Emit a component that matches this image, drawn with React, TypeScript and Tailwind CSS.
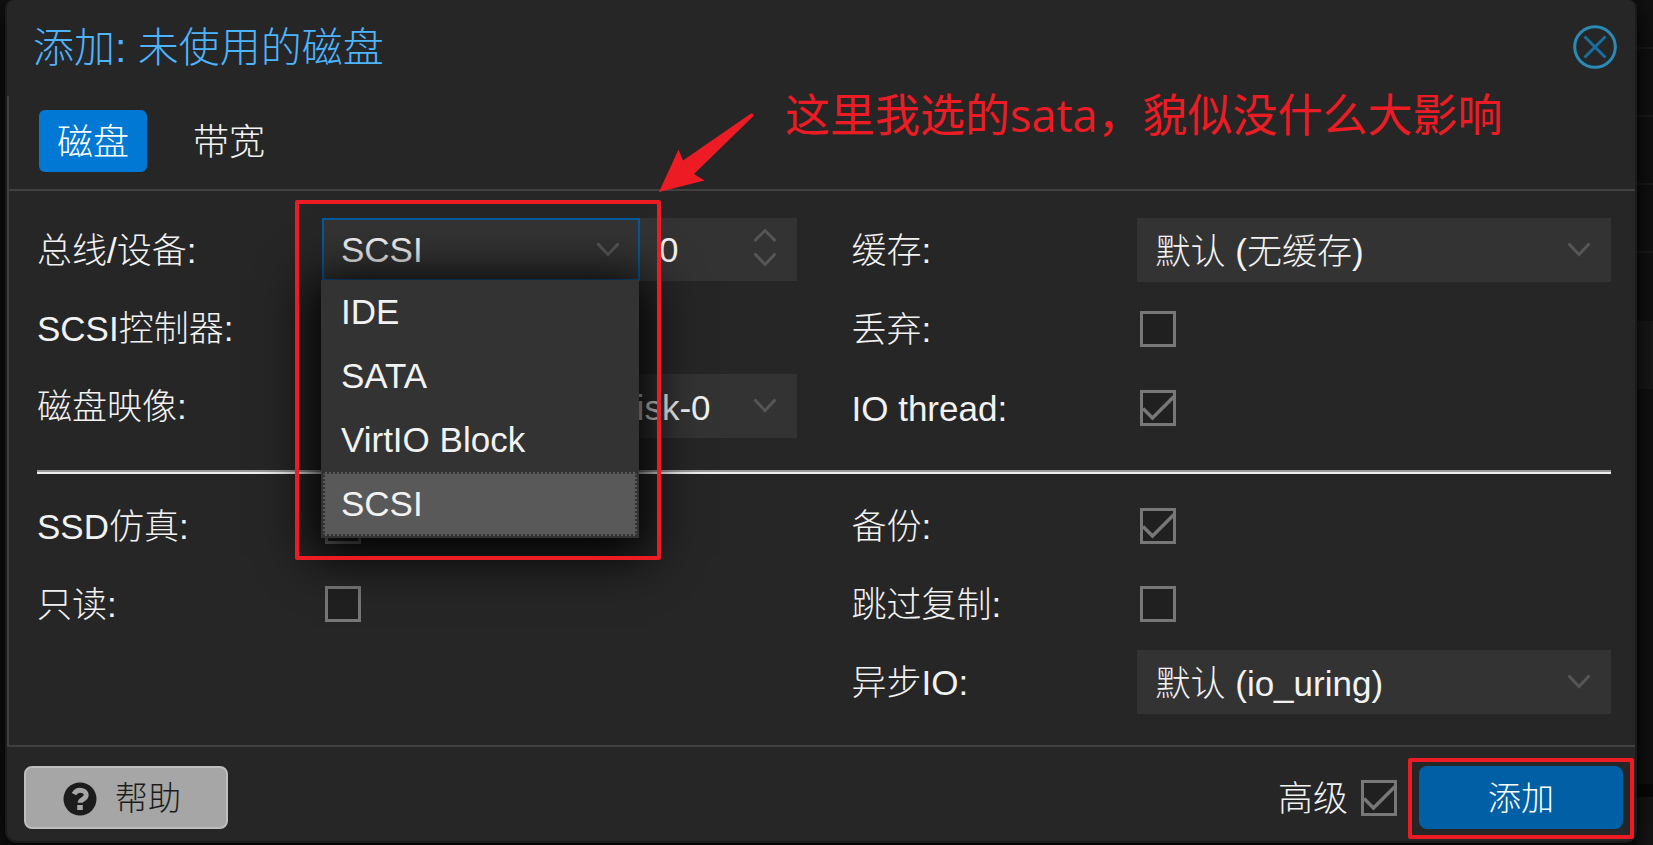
import type { ReactNode } from "react";

function Chevron({ up = false }: { up?: boolean }) {
  return (
    <svg width="24" height="16" viewBox="0 0 24 16" fill="none" stroke="#565656" strokeWidth="3" aria-hidden="true">
      <path d={up ? "M1.5 14 12 3.5 22.5 14" : "M1.5 1.500 12 12.500 22.5 1.500"} />
    </svg>
  );
}

function Row({ label, htmlFor, children }: { label: string; htmlFor: string; children?: ReactNode }) {
  return (
    <div className="flex h-16 items-center">
      <label htmlFor={htmlFor} className="w-[285px] shrink-0 pt-0.5 whitespace-nowrap">
        {label}
      </label>
      <div className="flex h-full min-w-0 flex-1 items-center">{children}</div>
    </div>
  );
}

function Select({ id, value }: { id: string; value: string }) {
  return (
    <div className="relative min-w-0 flex-1">
      <select id={id} className="block h-16 w-full appearance-none bg-[#333333] pt-1 pr-14 pl-[19px] outline-none">
        <option>{value}</option>
      </select>
      <span className="pointer-events-none absolute top-6 right-5">
        <Chevron />
      </span>
    </div>
  );
}

function Check({ id, checked = false }: { id: string; checked?: boolean }) {
  return (
    <span className="relative ml-[3px] block size-9 shrink-0">
      <input
        id={id}
        type="checkbox"
        defaultChecked={checked}
        className="peer block size-9 appearance-none border-3 border-[#777777] bg-[#202020]"
      />
      <svg
        className="pointer-events-none absolute inset-0 hidden peer-checked:block"
        width="36"
        height="36"
        viewBox="0 0 36 36"
        fill="none"
        stroke="#777777"
        strokeWidth="3.5"
        aria-hidden="true"
      >
        <path d="M3 18.5 12.5 28 34 6.5" />
      </svg>
    </span>
  );
}

const busTypes = ["IDE", "SATA", "VirtIO Block", "SCSI"];

function BusSelect() {
  return (
    <div className="relative w-[318px] shrink-0 self-start">
      <select
        id="bus"
        defaultValue="SCSI"
        className="block h-[63px] w-full appearance-none border-2 border-[#005a9e] bg-[#333333] pl-[17px] outline-none"
      >
        {busTypes.map((b) => (
          <option key={b}>{b}</option>
        ))}
      </select>
      <span className="pointer-events-none absolute top-6 right-5">
        <Chevron />
      </span>
      <ul
        role="listbox"
        aria-label="总线"
        className="absolute top-[62px] -left-px z-10 w-full border-x-2 border-b-2 border-[#333333] bg-[#333333] shadow-[0_8px_48px_10px_#000000]"
      >
        {busTypes.map((b) => (
          <li
            key={b}
            role="option"
            aria-selected={b === "SCSI"}
            className="flex h-16 items-center border-2 border-dotted border-transparent pl-4 aria-selected:border-[#333333] aria-selected:bg-[#595959]"
          >
            {b}
          </li>
        ))}
      </ul>
      <span className="pointer-events-none absolute -top-[18px] -left-[27px] z-20 h-[360px] w-[366px] rounded-xs border-4 border-[#ed1c24]" />
    </div>
  );
}

export default function App() {
  return (
    <div className="relative min-h-screen overflow-hidden bg-[#111111] pr-4 pl-[5px] font-['Liberation_Sans','Noto_Sans_CJK_SC',sans-serif] text-[35px] leading-[42px] font-light text-[#f2f2f2]">
      <div className="absolute inset-y-0 right-0 flex w-4 flex-col" aria-hidden="true">
        <div className="h-[49px] border-b-2 border-[#1a1a1a]" />
        <div className="h-17 border-b-2 border-[#1a1a1a]" />
        <div className="h-17 border-b-2 border-[#1a1a1a]" />
        <div className="h-17 border-b-2 border-[#1a1a1a]" />
        <div className="h-17" />
        <div className="h-17 bg-[#191919]" />
        <div className="flex-1" />
        <div className="h-[13px] bg-[#080808]" />
        <div className="h-12 bg-[#161616]" />
      </div>

      <section
        role="dialog"
        aria-labelledby="dialog-title"
        className="relative rounded-t-lg rounded-b-xl border-x-2 border-b-2 border-[#1b1b1b] bg-[#262626] shadow-[0_8px_24px_#000000]"
      >
        <header className="flex h-24 items-start justify-between pt-[23px] pr-[18px] pl-[26px]">
          <h1 id="dialog-title" className="text-[41px] leading-[50px] text-[#4db4ff]">
            添加: 未使用的磁盘
          </h1>
          <button type="button" aria-label="关闭" className="mt-0.5">
            <svg width="44" height="44" viewBox="0 0 44 44" fill="none">
              <circle cx="22" cy="22" r="20.3" stroke="#2a8ab5" strokeWidth="3" />
              <path d="M11.5 11.5 32.5 32.5M32.5 11.5 11.5 32.5" stroke="#166f9e" strokeWidth="3" />
            </svg>
          </button>
        </header>

        <div className="border-b-2 border-l-2 border-[#404040]">
          <div role="tablist" className="flex gap-[10px] border-b-2 border-[#404040] pt-[14px] pb-[17px] pl-[30px]">
            <button
              type="button"
              role="tab"
              aria-selected="true"
              className="h-[62px] rounded-md bg-[#0078d4] px-[18px] pt-1 text-[36px] text-white"
            >
              磁盘
            </button>
            <button type="button" role="tab" aria-selected="false" className="h-[62px] px-9 pt-1 text-[36px]">
              带宽
            </button>
          </div>

          <div className="pt-[27px] pr-6 pb-[31px] pl-7">
            <div className="grid grid-cols-2 gap-x-[55px]">
              <div className="flex flex-col gap-[14px]">
                <Row label="总线/设备:" htmlFor="bus">
                  <BusSelect />
                  <div className="relative min-w-0 flex-1 self-start">
                    <input
                      type="text"
                      inputMode="numeric"
                      aria-label="设备编号"
                      defaultValue="0"
                      className="block h-[63px] w-full bg-[#333333] pl-[19px] outline-none"
                    />
                    <span className="pointer-events-none absolute top-[9px] right-5 flex flex-col gap-[9px]">
                      <Chevron up />
                      <Chevron />
                    </span>
                  </div>
                </Row>
                <Row label="SCSI控制器:" htmlFor="controller">
                  <output id="controller" />
                </Row>
                <Row label="磁盘映像:" htmlFor="image">
                  <Select id="image" value="local-lvm:vm-100-disk-0" />
                </Row>
              </div>
              <div className="flex flex-col gap-[15px]">
                <Row label="缓存:" htmlFor="cache">
                  <Select id="cache" value="默认 (无缓存)" />
                </Row>
                <Row label="丢弃:" htmlFor="discard">
                  <Check id="discard" />
                </Row>
                <Row label="IO thread:" htmlFor="iothread">
                  <Check id="iothread" checked />
                </Row>
              </div>
            </div>

            <hr className="mt-[30px] mb-5 h-1 border-t-2 border-b-2 border-t-[#9a9a9a] border-b-[#eeeeee]" />

            <div className="grid grid-cols-2 gap-x-[55px]">
              <div className="flex flex-col gap-[14px]">
                <Row label="SSD仿真:" htmlFor="ssd">
                  <Check id="ssd" />
                </Row>
                <Row label="只读:" htmlFor="readonly">
                  <Check id="readonly" />
                </Row>
              </div>
              <div className="flex flex-col gap-[14px]">
                <Row label="备份:" htmlFor="backup">
                  <Check id="backup" checked />
                </Row>
                <Row label="跳过复制:" htmlFor="replicate">
                  <Check id="replicate" />
                </Row>
                <Row label="异步IO:" htmlFor="aio">
                  <Select id="aio" value="默认 (io_uring)" />
                </Row>
              </div>
            </div>
          </div>
        </div>

        <footer className="flex items-center justify-between pt-[19px] pr-3 pb-3 pl-[17px]">
          <button
            type="button"
            className="flex h-[63px] w-[204px] items-center justify-center gap-[18px] rounded-lg border-2 border-[#bdbdbd] bg-[#a6a6a6] pt-0.5 pr-2 text-[33px] text-[#1c1c1c]"
          >
            <svg width="34" height="34" viewBox="0 0 34 34" aria-hidden="true">
              <circle cx="17" cy="17" r="16.5" fill="#1c1c1c" />
              <path
                d="M11 12.2C12.5 9.2 14.4 8.2 17 8.2c3.4 0 6.200 2 6.200 4.800 0 4.500-6 4.200-6 7.800"
                fill="none"
                stroke="#a6a6a6"
                strokeWidth="5"
              />
              <rect x="14.200" y="23" width="5.600" height="5" fill="#a6a6a6" />
            </svg>
            <span>帮助</span>
          </button>
          <div className="flex items-center">
            <label htmlFor="advanced" className="mr-[10px] pt-0.5">
              高级
            </label>
            <Check id="advanced" checked />
            <div className="relative ml-[22px]">
              <button
                type="button"
                className="block h-[63px] w-[204px] rounded-lg bg-[#005fa5] pt-0.5 text-[33px] text-white"
              >
                添加
              </button>
              <span className="pointer-events-none absolute -inset-x-[11px] -top-2 -bottom-[10px] rounded-xs border-4 border-[#ed1c24]" />
            </div>
          </div>
        </footer>

        <p className="pointer-events-none absolute top-[87px] left-[778px] font-['Open_Sans','Noto_Sans_CJK_SC',sans-serif] text-[45px] leading-[56px] font-normal whitespace-nowrap text-[#ed1c24]">
          这里我选的sata，貌似没什么大影响
        </p>
        <svg
          className="pointer-events-none absolute top-[112px] left-[651px]"
          width="98"
          height="82"
          viewBox="0 0 98 82"
          aria-hidden="true"
        >
          <path d="M1 80 20.500 37.500 25 48.500 93 1.500Q96 1 95.500 4L36 62 46.500 68.500Z" fill="#ed1c24" />
        </svg>
      </section>
    </div>
  );
}
